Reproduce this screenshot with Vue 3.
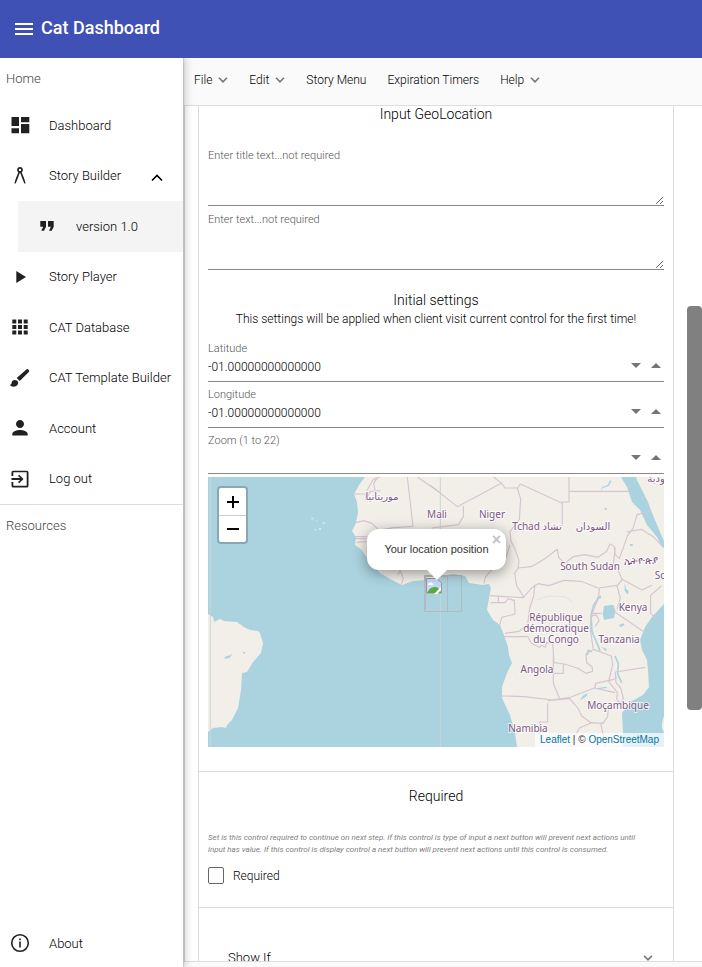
<script setup>
import { ref } from 'vue'

const navItems = ref([
  { label: 'Dashboard', icon: 'dashboard' },
  { label: 'Story Builder', icon: 'compass', open: true },
  { label: 'version 1.0', icon: 'quote', child: true },
  { label: 'Story Player', icon: 'play' },
  { label: 'CAT Database', icon: 'grid' },
  { label: 'CAT Template Builder', icon: 'brush' },
  { label: 'Account', icon: 'person' },
  { label: 'Log out', icon: 'logout' },
])

const icons = {
  dashboard: 'M3.5 4h7.5v9h-7.500zM13 4h8.300v5.300h-8.300zM3.500 15.200h7.500v5.100h-7.500zM13 11h8.300v9.300h-8.300z',
  compass: 'M12 3c1.600 0 2.900 1.300 2.900 2.900 0 1-.5 1.800-1.200 2.300l1 2.900 1.200 2.600 1.500 4.900-.2 1.200-1-.6-2.500-6.300-1.300-3.700h-.8l-1.300 3.700-2.500 6.300-1 .6-.2-1.200 1.500-4.900 1.200-2.600 1-2.900c-.7-.5-1.200-1.300-1.200-2.300 0-1.600 1.300-2.900 2.900-2.900zm0 1.700a1.200 1.200 0 1 0 0 2.400 1.200 1.200 0 0 0 0-2.400z',
  quote: 'M6.300 16.700h2.700l2-4V7H5.300v5.700h2.900zm7.700 0h2.700l2-4V7H13v5.700h2.900z',
  play: 'M8.300 6v12l9.700-6z',
  grid: 'M4.300 4.500h4v4h-4zM10 4.500h4v4h-4zM15.700 4.500h4v4h-4zM4.300 10h4v4h-4zM10 10h4v4h-4zM15.700 10h4v4h-4zM4.300 15.500h4v4h-4zM10 15.500h4v4h-4zM15.700 15.500h4v4h-4z',
  brush: 'M6.800 14c-1.800 0-3.200 1.300-3.200 3 0 1.310-1 1.800-2 1.800.9 1.200 2.300 1.900 4.400 1.900 2.410 0 4.200-1.600 4.200-3.900 0-1.600-1.540-2.800-3.400-2.800zm11.300-10.300L8.700 12.100l3 3 8.900-8.900a1.700 1.700 0 0 0-2.500-2.500z',
  person: 'M12 12c2.200 0 4-1.800 4-4s-1.800-4-4-4-4 1.800-4 4 1.800 4 4 4zm0 2c-2.700 0-7.700 1.340-7.700 4v1.500h15.400V18c0-2.660-5-4-7.700-4z',
  logout: 'M20.500 5.500v13.200c0 1-.8 1.800-1.800 1.800H5.300c-1 0-1.800-.8-1.800-1.800V15h1.800v3.800h13.400V5.300H5.300V9H3.500V5.500c0-1 .8-1.800 1.800-1.800h13.400c1 0 1.800.8 1.800 1.800zM11.200 16.300l4.300-4.300-4.300-4.300-1.200 1.200 2.200 2.200H3.500v1.800h8.700L10 15.100z',
}

const menus = [
  { label: 'File', drop: true },
  { label: 'Edit', drop: true },
  { label: 'Story Menu' },
  { label: 'Expiration Timers' },
  { label: 'Help', drop: true },
]

const titleText = ref('')
const bodyText = ref('')
const required = ref(false)
const coords = ref([
  { id: 'latitude', label: 'Latitude', value: '-01.00000000000000' },
  { id: 'longitude', label: 'Longitude', value: '-01.00000000000000' },
  { id: 'zoom', label: 'Zoom (1 to 22)', value: '' },
])

const places = [
  { name: 'موريتانيا', x: 174, y: 23 },
  { name: 'Mali', x: 229, y: 41 },
  { name: 'Niger', x: 284, y: 41 },
  { name: 'Tchad تشاد', x: 329, y: 53 },
  { name: 'السودان', x: 385, y: 53 },
  { name: 'South Sudan', x: 382, y: 93 },
  { name: 'ኢትዮጵያ', x: 433, y: 87 },
  { name: 'Kenya', x: 425, y: 134 },
  { name: 'République', x: 348, y: 144 },
  { name: 'démocratique', x: 348, y: 155 },
  { name: 'du Congo', x: 348, y: 166 },
  { name: 'Tanzania', x: 411, y: 166 },
  { name: 'Angola', x: 329, y: 196 },
  { name: 'Moçambique', x: 410, y: 232 },
  { name: 'Namibia', x: 320, y: 255 },
]
</script>

<template>
  <div class="app">
    <header class="topbar">
      <button class="burger" type="button" aria-label="Toggle menu">
        <svg viewBox="0 0 18 12"><path d="M0 0h18v2H0zM0 5h18v2H0zM0 10h18v2H0z" /></svg>
      </button>
      <h1>Cat Dashboard</h1>
    </header>

    <div class="body">
      <aside class="sidebar">
        <p class="group">Home</p>
        <nav class="nav">
          <a v-for="item in navItems" :key="item.label" href="#" class="nav-item" :class="{ child: item.child }">
            <svg class="icon" viewBox="0 0 24 24"><path :d="icons[item.icon]" /></svg>
            <span>{{ item.label }}</span>
            <svg v-if="item.open" class="caret" viewBox="0 0 12 8"><path d="M1 6.500 6 1.500l5 5" /></svg>
          </a>
        </nav>
        <p class="group resources">Resources</p>
        <a href="#" class="nav-item about">
          <svg class="icon" viewBox="0 0 24 24">
            <circle cx="12" cy="12" r="8.300" fill="none" stroke="currentColor" stroke-width="1.600" />
            <path d="M11.200 7.500h1.600v1.700h-1.600zM11.200 10.500h1.600v6h-1.600z" />
          </svg>
          <span>About</span>
        </a>
      </aside>

      <main class="main">
        <div class="menubar">
          <button v-for="m in menus" :key="m.label" type="button" class="menu">
            {{ m.label }}
            <svg v-if="m.drop" class="chev" viewBox="0 0 10 6"><path d="M1 .8 5 4.800 9 .8" /></svg>
          </button>
        </div>

        <div class="pane">
          <div class="card">
            <section class="section geo">
              <h2>Input GeoLocation</h2>
              <div class="texts">
                <div class="field">
                  <label for="title-text">Enter title text...not required</label>
                  <textarea id="title-text" v-model="titleText"></textarea>
                </div>
                <div class="field">
                  <label for="body-text">Enter text...not required</label>
                  <textarea id="body-text" v-model="bodyText"></textarea>
                </div>
              </div>

              <h2>Initial settings</h2>
              <p class="hint">This settings will be applied when client visit current control for the first time!</p>

              <div class="numbers">
                <div v-for="c in coords" :key="c.id" class="field">
                  <label :for="c.id">{{ c.label }}</label>
                  <div class="spin">
                    <input :id="c.id" v-model="c.value" type="text" />
                    <button type="button" :aria-label="'Decrease ' + c.label">
                      <svg viewBox="0 0 10 5"><path d="M0 0h10L5 5z" /></svg>
                    </button>
                    <button type="button" :aria-label="'Increase ' + c.label">
                      <svg viewBox="0 0 10 5"><path d="M0 5h10L5 0z" /></svg>
                    </button>
                  </div>
                </div>
              </div>

              <div class="map">
                <svg class="tiles" viewBox="0 0 456 270" preserveAspectRatio="xMidYMid slice">
                  <path class="land" d="M157 0 151 8 149 12 146 17 149 25 150 35 148 46 144 54 148 60 147 68 154 73 159 81 172 96 184 103 194 108 205 104 219 103 239 98 245 97 257 99 261 106 268 107 275 108 281 107 283 111 281 121 279 133 285 143 292 148 296 158 300 170 301 178 304 186 299 196 294 210 294 221 302 238 307 256 309 270H415V256L414 236 422 225 435 218 441 210 440 193 439 183 434 173 432 163 437 150 444 140 456 127V0z" />
                  <path class="land" d="M0 137 5 140 6 145 12 142 16 144 29 145 36 150 42 153 50 154 52 156 55 166 53 176 45 185 39 195 34 196 33 213 30 231 28 235 24 243 19 248 18 251 14 250 5 251 0 255z" />
                  <path class="land" d="M456 239 454 246 454 251 456 256z" />
                  <path class="water" d="M413 0 419 10 424 25 432 33 439 48 449 60 454 70 456 71V64L452 55 444 36 440 25 434 13 429 3 428 0z" />
                  <g transform="translate(222 -7) scale(.33333)">
                    <path class="water" d="M540 30l-6 14-18 8-4 12 6-10 18-6 8-14zM522 408l28-4 6 18-4 22-14 2-16 4-4-18zM584 340l4 16 8 8-2 10-10-12zM600 222h8v6h-8zM524 114h6v5h-6zM568 464l12-4 4 6-14 6zM515 530l16 8-4 6zM500 382l12-6 2 8-10 4zM450 690l10-14 14-6-4 8-14 10zM500 655l28-5 4 4-30 4zM132 404h6v5h-6zM150 384l8-3v5z" />
                    <path class="lake" d="M505 385l-14 20-8 30 3 50 18 42 6 16M485 545l-10-4-4 14M555 558l10 24-2 30 12 26" />
                    <path class="river" d="M320 390l35-12 50 2 22 15" />
                    <path class="border" d="M0 45l82 65M82 110l132-70M100 108v32l-15 24-80 10M165 0l50 40 10 14 38 0 8-12M271 42l126 58M417 21v75h-20v70M417 64h185M262 55l10 32-4 62-28 35 3 30 12 24 12 34-3 24M240 225l-12 38-40 32-22 26-4 20M264 294l40-4 38-22 40-30 4 24 18 18 26-20 34-6 40 8 26-18 10-22 12 6 4 26 12 12 25-70 16-20 12-42 36-10M590 186l44-8 36 22 28 30M556 232l-6 50 14 18 12 28 60 32 30-14M694 348l-32 28v54l16 14M575 330l-14 18 10 36-10 34M264 294l-10 16 6 38 22 34M180 377l100 6 24-28 20-14 32 6 46-16 52 3M454 334l50 20 58-8 14-16M205 378v20h-24M205 398h20l10-12 18 6 2 40-40 10-5 22M225 490l42-6 26-20 6-50 12-36 4-34M222 500h72l10 20 24 12 6-6 12 6 4-14h18l4 60 30 4 40 12 26 16 20-6-2-14-16-12-2-26 24-14M370 550v90l18 44M215 678l70 2 80 10 56-8 72-28 62 14M400 582v28h-30M353 700v56h-24v54M353 692l66-6 26 30 10 22 28 20 36 2 14-20 2-28M484 758l-36 16-28 56M512 758l14 72M508 354l-2 28-20 50-6 40 10 66 54 20 4 26-12 50 26 34-2 20 14 14 6-18-8-30-14-16-2-32 90-14M485 430h30M551 424l88 60M495 470l12-18-8-18-18 6M495 654l2-14 54-12 10-6" />
                    <path class="thin" d="M31 21v810" />
                  </g>
                  <g transform="translate(-8 -7) scale(.33333)">
                    <path class="border" d="M463 72h34v18M500 64l20-36 20-7M525 60l-4-20 12-18M497 90l14-26 30-2M622 21l17 148-58 4-44 8M468 158l24-6 24 8 24 24M466 200h34M466 206h34M470 217l30-2M652 21l70 48M594 315l6-14 10 24-6 18" />
                    <path class="islet" d="M334 143h6v5h-6zM368 156h6v6h-6zM344 177h5v4h-5zM357 174h6v5h-6zM348 151h4v3h-4z" />
                    <path class="water" d="M74 560l16-4 8-6-10 14-14 2zM126 544l12 4-6 4z" />
                    <path class="thin" d="M31 21v810" />
                  </g>
                  <text v-for="p in places" :key="p.name" class="place" :x="p.x" :y="p.y">{{ p.name }}</text>
                  <text class="place" x="448" y="5">ودية</text>
                  <text class="place" x="452" y="102">Sc</text>
                  <g class="marker">
                    <path d="M216.500 98.500h37v36h-37zM239.500 98.500v36" />
                    <path d="M217.500 133V99.500h22" />
                  </g>
                  <g transform="translate(218 101)">
                    <path d="M.5.5h10l5 4v10.500H.5z" fill="#c3d9fb" stroke="#999" />
                    <path d="M2 6q1.500-3 4-1 2 0 1.500 2H2z" fill="#fff" />
                    <path d="M1 15q3-7 9-6 4 1 5 6z" fill="#5cab38" />
                    <path d="M8 16 15 9v3l-3.500 4z" fill="#fff" />
                  </g>
                </svg>
                <div class="zoom">
                  <button type="button" aria-label="Zoom in"><svg viewBox="0 0 12 12"><path d="M5 0h2v5h5v2H7v5H5V7H0V5h5z" /></svg></button>
                  <button type="button" aria-label="Zoom out"><svg viewBox="0 0 12 12"><path d="M0 5h12v2H0z" /></svg></button>
                </div>
                <div class="popup">
                  Your location position
                  <button type="button" class="close" aria-label="Close">×</button>
                </div>
                <div class="credit"><a href="#">Leaflet</a> | © <a href="#">OpenStreetMap</a></div>
              </div>
            </section>

            <section class="section required">
              <h2>Required</h2>
              <p class="note">
                Set is this control required to continue on next step. If this control is type of input a next button will
                prevent next actions until input has value. If this control is display control a next button will prevent
                next actions until this control is consumed.
              </p>
              <label class="check"><input v-model="required" type="checkbox" />Required</label>
            </section>

            <section class="section">
              <button type="button" class="expander">
                Show If
                <svg class="chev" viewBox="0 0 10 6"><path d="M1 .8 5 4.800 9 .8" /></svg>
              </button>
            </section>
          </div>
          <div class="thumb"></div>
        </div>
      </main>
    </div>
  </div>
</template>

<style>
body {
  margin: 0;
  overflow: hidden;
}
</style>

<style scoped>
* {
  box-sizing: border-box;
}
.app {
  display: flex;
  flex-direction: column;
  height: 100vh;
  font-family: Roboto, "Liberation Sans", sans-serif;
  font-size: 12px;
  font-weight: 300;
  color: #000;
  background: #fafafa;
}
h1, h2, p {
  margin: 0;
}
button {
  padding: 0;
  border: 0;
  background: none;
  font: inherit;
  color: inherit;
  cursor: pointer;
}
svg {
  display: block;
  fill: currentColor;
}
.topbar {
  display: flex;
  align-items: center;
  gap: 8px;
  height: 58px;
  flex: none;
  padding: 0 15px 3px;
  background: #3f51b5;
  color: #fff;
}
.burger {
  padding-top: 3px;
}
.burger svg {
  width: 18px;
  height: 12px;
}
h1 {
  font-size: 18px;
  font-weight: 500;
}
.body {
  display: flex;
  flex: 1;
  min-height: 0;
}
.sidebar {
  position: relative;
  z-index: 1;
  display: flex;
  flex-direction: column;
  flex: none;
  width: 183px;
  background: #fff;
  box-shadow: 1px 0 1px rgba(0, 0, 0, .1), 2px 0 8px rgba(0, 0, 0, .22);
  clip-path: inset(0 -16px 0 0);
}
.group {
  padding: 0 6px;
  font-size: 13px;
  line-height: 42px;
  color: #444;
}
.nav {
  display: grid;
  grid-template-columns: minmax(0, 1fr);
  grid-auto-rows: 1fr;
  min-height: 405px;
  border-bottom: 1px solid #ddd;
}
.nav-item {
  display: flex;
  align-items: center;
  gap: 17px;
  padding: 0 8px;
  font-size: 13px;
  color: #000;
  text-decoration: none;
  white-space: nowrap;
}
.nav-item.child {
  margin-left: 18px;
  padding-left: 17px;
  background: #f4f4f4;
}
.nav-item .icon {
  flex: none;
  width: 24px;
  height: 24px;
  color: #212121;
}
.nav-item.about {
  height: 48px;
  margin-top: auto;
}
.nav-item .caret {
  width: 12px;
  height: 8px;
  margin: 4px 12px 0 auto;
}
.caret path, .chev path {
  fill: none;
  stroke: currentColor;
  stroke-width: 1.6;
}
.main {
  display: flex;
  flex-direction: column;
  flex: 1;
  min-width: 0;
  padding: 0 0 5px 1px;
}
.menubar {
  display: flex;
  align-items: center;
  gap: 21px;
  height: 47px;
  flex: none;
  padding: 0 10px 4px;
}
.menu {
  display: flex;
  align-items: center;
  gap: 6px;
  white-space: nowrap;
}
.chev {
  width: 10px;
  height: 6px;
  color: #757575;
}
.pane {
  position: relative;
  flex: 1;
  min-height: 0;
  padding: 0 28px 0 13px;
  border: 1px solid #ddd;
  border-right: 0;
  background: #fff;
  overflow: hidden;
}
.card {
  border: solid #ddd;
  border-width: 0 1px;
}
.section {
  padding: 0 9px;
}
.section + .section {
  border-top: 1px solid #ddd;
}
h2 {
  font-size: 14px;
  font-weight: inherit;
  line-height: 17px;
  text-align: center;
}
.geo {
  padding-bottom: 24px;
}
.texts {
  display: grid;
  gap: 6px;
  padding: 25px 0 22px;
}
.field {
  display: flex;
  flex-direction: column;
  border-bottom: 1px solid #888;
}
.field label {
  font-size: 11px;
  line-height: 15px;
  color: #555;
}
textarea, input {
  border: 0;
  padding: 0;
  outline: 0;
  background: none;
  font: inherit;
  color: inherit;
}
textarea {
  height: 42px;
  resize: vertical;
}
.hint {
  padding: 2px 0 14px;
  line-height: 16px;
  text-align: center;
}
.numbers {
  display: grid;
  gap: 5px;
  padding-bottom: 3px;
}
.spin {
  display: flex;
  align-items: flex-start;
  gap: 10px;
  padding: 0 3px 3px 0;
}
.spin input {
  flex: 1;
  min-width: 0;
  height: 22px;
}
.spin button {
  padding-top: 7px;
  color: #757575;
}
.spin svg {
  width: 10px;
  height: 5px;
}
.map {
  position: relative;
  height: 270px;
  overflow: hidden;
  background: #aad3df;
  font-family: "Liberation Sans", sans-serif;
  font-weight: 400;
}
.tiles {
  width: 100%;
  height: 100%;
}
.land {
  fill: #f2efe9;
}
.islet {
  fill: #dfe5dc;
}
.water {
  fill: #aad3df;
}
.lake, .river, .border, .thin {
  fill: none;
  stroke: #aad3df;
  stroke-width: 5;
}
.river {
  stroke-width: 2;
  stroke-opacity: .5;
}
.border {
  stroke: #d6c5d1;
  stroke-width: 3.5;
  stroke-linejoin: round;
}
.thin {
  stroke: #c8d5d6;
  stroke-width: 3;
}
.place {
  font-family: "Noto Sans", "DejaVu Sans", sans-serif;
  font-size: 10px;
  fill: #7c5684;
  stroke: #fff;
  stroke-width: 2px;
  stroke-opacity: .7;
  paint-order: stroke;
  text-anchor: middle;
}
.marker path {
  fill: none;
  stroke: #b5babd;
}
.zoom {
  position: absolute;
  top: 9px;
  left: 9px;
  display: grid;
  border: 2px solid rgba(0, 0, 0, .2);
  border-radius: 4px;
  background: #fff;
  background-clip: padding-box;
  color: #000;
}
.zoom button {
  display: grid;
  place-items: center;
  width: 27px;
  height: 27px;
}
.zoom button + button {
  border-top: 1px solid #ccc;
}
.zoom svg {
  width: 12px;
  height: 12px;
}
.popup {
  position: absolute;
  top: 52px;
  left: 50%;
  width: 139px;
  margin-left: -69px;
  border-radius: 12px;
  background: #fff;
  box-shadow: 0 3px 14px rgba(0, 0, 0, .4);
  font-size: 11px;
  line-height: 41px;
  color: #333;
  text-align: center;
  white-space: nowrap;
}
.popup::after {
  content: "";
  position: absolute;
  top: 100%;
  left: 50%;
  margin-left: -10px;
  border: 10px solid transparent;
  border-top-color: #fff;
  border-bottom: 0;
}
.close {
  position: absolute;
  top: 4px;
  right: 5px;
  font-size: 16px;
  font-weight: 700;
  line-height: 14px;
  color: #c3c3c3;
}
.credit {
  position: absolute;
  right: 0;
  bottom: 0;
  padding: 0 5px;
  background: rgba(255, 255, 255, .7);
  font-size: 10px;
  line-height: 14px;
  color: #333;
}
.credit a {
  color: #0078a8;
  text-decoration: none;
}
.required {
  padding-top: 16px;
  padding-bottom: 23px;
}
.note {
  padding: 27px 12px 11px 0;
  font-size: 8px;
  font-style: italic;
  font-weight: 400;
  line-height: 12px;
  color: #808080;
}
.check {
  display: flex;
  align-items: center;
  gap: 9px;
  width: max-content;
}
.check input {
  appearance: none;
  width: 16px;
  height: 17px;
  margin: 0;
  border: 1px solid #666;
  border-radius: 2px;
}
.expander {
  display: flex;
  align-items: center;
  justify-content: space-between;
  width: 100%;
  padding: 42px 11px 20px 20px;
  font-size: 13px;
  line-height: 16px;
}
.thumb {
  position: absolute;
  top: 200px;
  right: 0;
  width: 15px;
  height: 404px;
  border-radius: 4px;
  background: #808080;
}
</style>
